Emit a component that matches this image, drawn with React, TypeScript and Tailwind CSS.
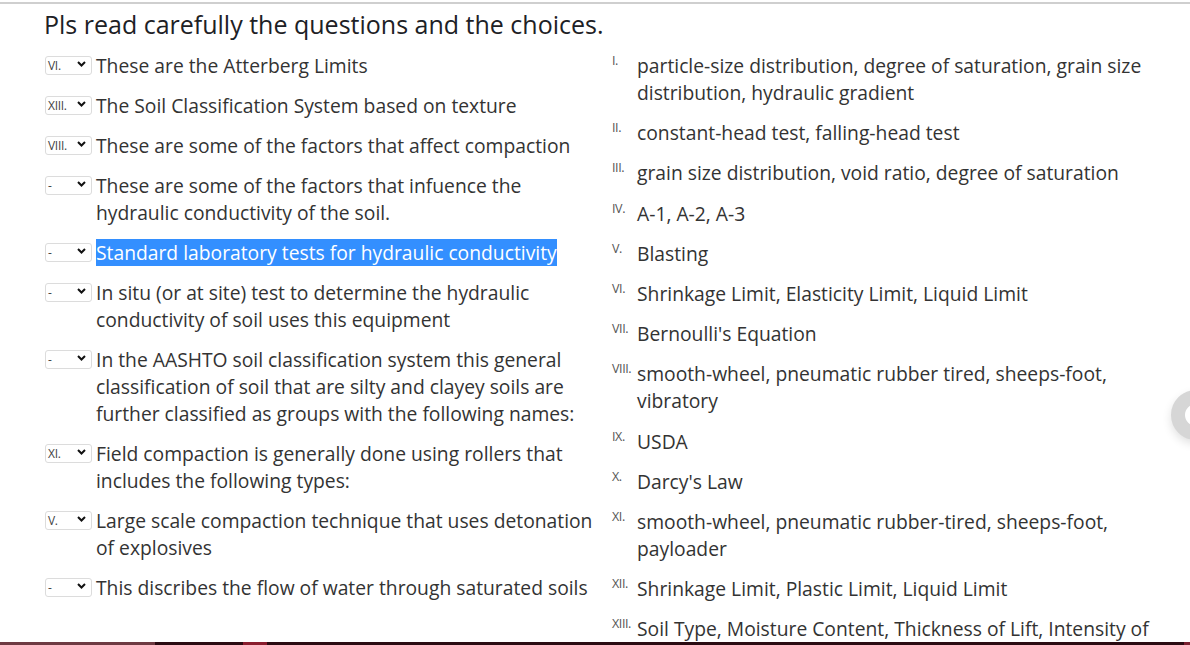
import React from "react";

type Question = { pick: string; text: string; selected?: boolean };

const questions: Question[] = [
  { pick: "VI.", text: "These are the Atterberg Limits" },
  { pick: "XIII.", text: "The Soil Classification System based on texture" },
  { pick: "VIII.", text: "These are some of the factors that affect compaction" },
  { pick: "-", text: "These are some of the factors that infuence the hydraulic conductivity of the soil." },
  { pick: "-", text: "Standard laboratory tests for hydraulic conductivity", selected: true },
  { pick: "-", text: "In situ (or at site) test to determine the hydraulic conductivity of soil uses this equipment" },
  {
    pick: "-",
    text: "In the AASHTO soil classification system this general classification of soil that are silty and clayey soils are further classified as groups with the following names:",
  },
  { pick: "XI.", text: "Field compaction is generally done using rollers that includes the following types:" },
  { pick: "V.", text: "Large scale compaction technique that uses detonation of explosives" },
  { pick: "-", text: "This discribes the flow of water through saturated soils" },
];

const choices: [string, string][] = [
  ["I.", "particle-size distribution, degree of saturation, grain size distribution, hydraulic gradient"],
  ["II.", "constant-head test, falling-head test"],
  ["III.", "grain size distribution, void ratio, degree of saturation"],
  ["IV.", "A-1, A-2, A-3"],
  ["V.", "Blasting"],
  ["VI.", "Shrinkage Limit, Elasticity Limit, Liquid Limit"],
  ["VII.", "Bernoulli's Equation"],
  ["VIII.", "smooth-wheel, pneumatic rubber tired, sheeps-foot, vibratory"],
  ["IX.", "USDA"],
  ["X.", "Darcy's Law"],
  ["XI.", "smooth-wheel, pneumatic rubber-tired, sheeps-foot, payloader"],
  ["XII.", "Shrinkage Limit, Plastic Limit, Liquid Limit"],
  ["XIII.", "Soil Type, Moisture Content, Thickness of Lift, Intensity of Compaction"],
];

function Pick({ value }: { value: string }) {
  return (
    <div className="flex h-[27px] shrink-0 items-center">
      <div className="flex h-[19px] w-[47px] items-center justify-between rounded-[3px] border border-[#dcdcdc] bg-white pl-[2px] pr-[5px]">
        <span className="text-[12px] leading-none tracking-[-0.3px] text-[#444]">{value}</span>
        <svg width="9" height="6" viewBox="0 0 9 6" className="mt-[-3px]">
          <polyline points="1,1 4.5,4.5 8,1" fill="none" stroke="#111" strokeWidth="2" />
        </svg>
      </div>
    </div>
  );
}

export default function App() {
  return (
    <div className="relative h-[645px] w-[1190px] overflow-hidden bg-white font-['Open_Sans',sans-serif] text-[#333]">
      <div className="mt-[2px] h-[2px] w-full bg-[#cfcfcf]" />

      <h2 className="ml-[44px] mt-[3px] text-[25px] leading-[34px] text-[#1d2125]">
        Pls read carefully the questions and the choices.
      </h2>

      <div className="mt-[11px] flex">
        {/* questions */}
        <div className="ml-[45px] w-[563px]">
          {questions.map((q, i) => (
            <div key={i} className="mb-[13px] flex gap-[4px]">
              <Pick value={q.pick} />
              <p className="w-[506px] text-[19.3px] leading-[27px]">
                {q.selected ? <span className="bg-[#338fff] text-white">{q.text}</span> : q.text}
              </p>
            </div>
          ))}
        </div>

        {/* choices */}
        <ol className="ml-[4px]">
          {choices.map(([n, t]) => (
            <li key={n} className="mb-[13.2px] flex">
              <span className="w-[25px] shrink-0 pt-[2px] text-[12.5px] leading-[14px] tracking-[-0.4px] text-[#555]">{n}</span>
              <span className="w-[530px] text-[19.3px] leading-[27px]">{t}</span>
            </li>
          ))}
        </ol>
      </div>

      {/* floating button peeking from the right edge */}
      <div className="absolute left-[1171px] top-[390px] h-[50px] w-[50px] rounded-full border-[14px] border-[#d6d6d6] bg-white shadow-[0_4px_10px_rgba(0,0,0,0.12)]" />

      {/* bottom bar */}
      <div className="absolute bottom-0 left-0 flex h-[3px] w-full">
        <div className="w-[155px] bg-[#6e3a42]" />
        <div className="w-[88px] bg-[#2a0b12]" />
        <div className="w-[24px] bg-[#8a1d2e]" />
        <div className="flex-1 bg-[#2a0b12]" />
        <div className="w-[6px] bg-[#7a2030]" />
      </div>
    </div>
  );
}
